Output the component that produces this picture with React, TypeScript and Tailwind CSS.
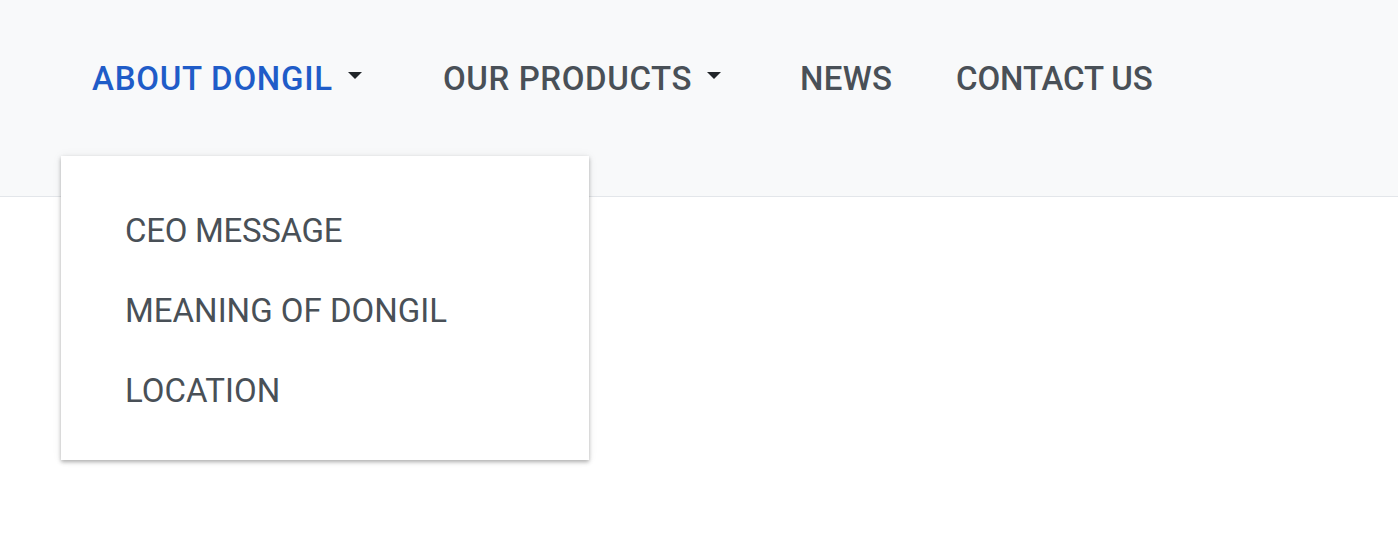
function Caret() {
  return (
    <span className="ml-[15px] inline-block h-0 w-0 border-x-[7px] border-t-[7px] border-x-transparent border-t-[#212529] translate-y-[-11px]" />
  );
}

export default function App() {
  return (
    <div className="relative h-[546px] w-full bg-white" style={{ fontFamily: "Roboto, 'Noto Sans', sans-serif" }}>
      <header className="h-[197px] border-b border-[#e3e6ea] bg-[#f8f9fa]">
        <nav className="flex pl-[92px] pt-[59px] text-[33px] font-medium leading-[40px] text-[#495057]">
          <div className="flex w-[351px] items-baseline text-[#1f5cc8]">
            <span className="tracking-[0.75px]">ABOUT DONGIL</span>
            <Caret />
          </div>
          <div className="flex w-[357px] items-baseline">
            <span className="tracking-[0.6px]">OUR PRODUCTS</span>
            <Caret />
          </div>
          <div className="w-[156px] tracking-[0.3px]">NEWS</div>
          <div className="tracking-[-0.1px]">CONTACT US</div>
        </nav>
      </header>
      <div className="absolute left-[61px] top-[156px] h-[304px] w-[528px] bg-white pl-[64px] pt-[35px] shadow-[0_2px_4px_rgba(0,0,0,0.3),0_0_10px_rgba(0,0,0,0.06)]">
        <ul className="text-[33px] font-normal leading-[80px] text-[#495057]">
          <li className="tracking-[-0.3px]">CEO MESSAGE</li>
          <li>MEANING OF DONGIL</li>
          <li>LOCATION</li>
        </ul>
      </div>
    </div>
  );
}
